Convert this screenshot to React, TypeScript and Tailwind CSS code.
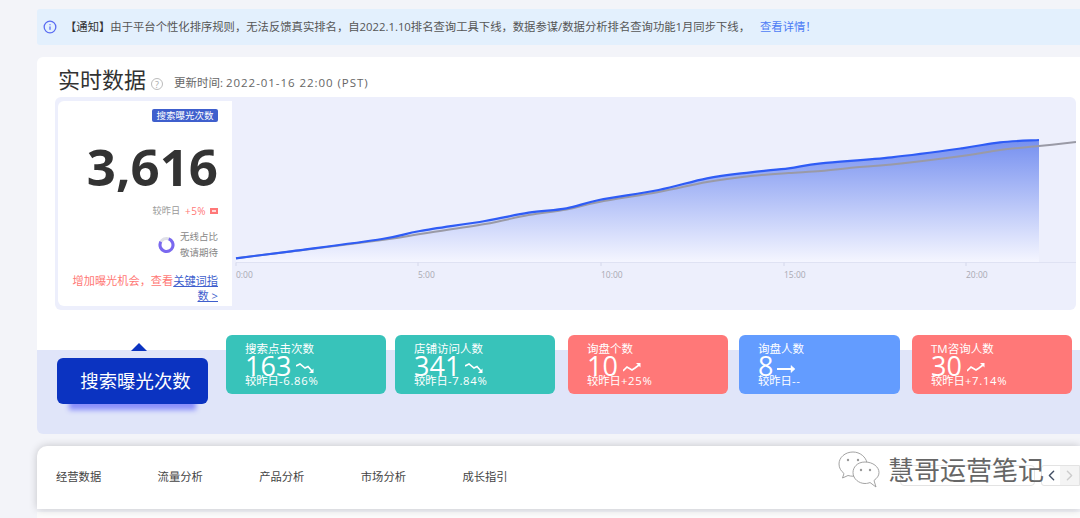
import { Info, ChevronLeft, ChevronRight } from "lucide-react";

type P = [number, number];
const blue: P[] = [[236,258.3],[295.6,250.7],[382,239],[420,231],[485,221],[528.6,212.7],[566.5,208.3],[599,200],[658.6,190],[707,178.3],[750.7,172.3],[788.6,168.3],[821,163.3],[891.6,157.3],[962,148.3],[1000,142.3],[1039,140]];
const gray: P[] = [[236,258.3],[382,240],[420,234],[485,224],[528.6,215],[566.5,209.5],[599,202],[658.6,192],[707,182],[750.7,176],[788.6,173],[821,171],[854,167.5],[891.6,164.5],[962,156],[1000,150],[1039,146],[1076,142]];

function smooth(a: P[]) {
  let d = `M${a[0][0]} ${a[0][1]}`;
  for (let i = 0; i < a.length - 1; i++) {
    const p0 = a[Math.max(i - 1, 0)];
    const p1 = a[i];
    const p2 = a[i + 1];
    const p3 = a[Math.min(i + 2, a.length - 1)];
    const c1x = p1[0] + (p2[0] - p0[0]) / 6;
    const c1y = p1[1] + (p2[1] - p0[1]) / 6;
    const c2x = p2[0] - (p3[0] - p1[0]) / 6;
    const c2y = p2[1] - (p3[1] - p1[1]) / 6;
    d += `C${c1x.toFixed(1)} ${c1y.toFixed(1)} ${c2x.toFixed(1)} ${c2y.toFixed(1)} ${p2[0]} ${p2[1]}`;
  }
  return d;
}

const FONT = "font-['Open_Sans','Noto_Sans_CJK_SC',sans-serif]";

function Trend({ kind }: { kind: "down" | "up" | "flat" }) {
  if (kind === "flat")
    return (
      <svg width="19" height="12" viewBox="0 0 19 12" className="ml-[4px] mt-[5px]" fill="none" stroke="#fff" strokeWidth="2">
        <path d="M0 6H16" />
        <path d="M14 2.5L18 6L14 9.5Z" fill="#fff" strokeWidth="0.5" />
      </svg>
    );
  return (
    <svg width="18" height="11" viewBox="0 0 18 11" className="ml-[5px] mt-[4px]" fill="none" stroke="#fff" strokeWidth="1.6">
      {kind === "down" ? (
        <>
          <path d="M0 3L4 1L9 5L12 3.5L16 8" />
          <path d="M17.5 10H13L17.5 5.5Z" fill="#fff" strokeWidth="0" />
        </>
      ) : (
        <>
          <path d="M0 8L4 4L9 7L12 5L16 2" />
          <path d="M17.5 0H13L17.5 4.5Z" fill="#fff" strokeWidth="0" />
        </>
      )}
    </svg>
  );
}

function Tile({ title, value, delta, kind, bg, w }: { title: string; value: string; delta: string; kind: "down" | "up" | "flat"; bg: string; w: string }) {
  return (
    <div className={`${bg} ${w} h-[59px] shrink-0 rounded-[6px] pl-[19px] pt-[7px] text-white`}>
      <div className="text-[11.5px] leading-[14px]">{title}</div>
      <div className="flex h-[20px] items-center text-[27px] leading-[20px]">
        {value}
        <Trend kind={kind} />
      </div>
      <div className="mt-[-2px] text-[11.3px] leading-[14px]">
        较昨日<span className="tracking-[0.7px]">{delta}</span>
      </div>
    </div>
  );
}

export default function App() {
  return (
    <div className={`${FONT} relative flex h-[518px] w-[1080px] flex-col overflow-hidden bg-[#f3f4f9] pl-[37px] pt-[9px]`}>
      <div className="flex h-[36px] shrink-0 items-center rounded-l-[3px] bg-[#e3f0fd] pl-[6px] text-[11.34px] text-[#555]">
        <Info size={14} color="#5a6cf2" strokeWidth={2.2} />
        <span className="ml-[8px] text-[#333]">【通知】</span>
        <span>由于平台个性化排序规则，无法反馈真实排名，自2022.1.10排名查询工具下线，数据参谋/数据分析排名查询功能1月同步下线，</span>
        <span className="ml-[10px] text-[#4d7cf5]">查看详情！</span>
      </div>

      <div className="mt-[12px] h-[278px] shrink-0 rounded-tl-[6px] bg-white">
        <div className="flex h-[40px] items-end pl-[21px]">
          <span className="mb-[2px] text-[22px] leading-[32px] text-[#333]">实时数据</span>
          <span className="mb-[7px] ml-[5px] flex h-[12px] w-[12px] items-center justify-center rounded-full border border-[#bbb] text-[9px] leading-none text-[#aaa]">?</span>
          <span className="mb-[6px] ml-[11px] text-[11.5px] leading-[16px] text-[#666]">
            更新时间: <span className="tracking-[0.95px]">2022-01-16 22:00 (PST)</span>
          </span>
        </div>
        <div className="ml-[18px] flex h-[213px] w-[1021px] rounded-[6px] bg-[#edeffc] py-[4px] pl-[3px]">
          <div className="flex h-[205px] w-[174px] shrink-0 flex-col items-end rounded-l-[6px] bg-white pr-[14px] pt-[8px]">
            <div className="flex h-[13px] w-[66px] items-center justify-center rounded-[2px] bg-[#3f5fcd] text-[9.5px] leading-none text-white">搜索曝光次数</div>
            <div className="mt-[10px] text-[51px] font-bold leading-[68px] text-[#333]">3,616</div>
            <div className="mt-[4px] flex items-center text-[9.2px] leading-[14px] text-[#999]">
              较昨日
              <span className="ml-[5px] text-[10px] tracking-[0.4px] text-[#ff7878]">+5%</span>
              <span className="ml-[4px] flex h-[6px] w-[8px] items-center justify-center bg-[#ff7878]">
                <span className="h-[2px] w-[4px] bg-[#ffd9d9]" />
              </span>
            </div>
            <div className="mt-[11px] flex items-center">
              <svg width="17" height="18" viewBox="0 0 17 18" fill="none" strokeWidth="3">
                <circle cx="8.5" cy="9" r="6.5" stroke="#dfe0e8" />
                <circle cx="8.5" cy="9" r="6.5" stroke="#7a68f0" strokeDasharray="31 10" transform="rotate(-70 8.5 9)" />
              </svg>
              <div className="ml-[5px] text-[9.5px] leading-[16px] text-[#888]">
                <div>无线占比</div>
                <div>敬请期待</div>
              </div>
            </div>
            <div className="mt-[12px] w-[150px] text-right text-[11.2px] leading-[15px] text-[#ff7875]">
              增加曝光机会，查看<span className="text-[#3f5fcd] underline">关键词指数 &gt;</span>
            </div>
          </div>
          <svg width="844" height="205" viewBox="232 101 844 205" className="shrink-0">
            <defs>
              <linearGradient id="area" x1="0" y1="0" x2="0" y2="1">
                <stop offset="0" stopColor="#7690f0" />
                <stop offset="1" stopColor="#f5f6ff" />
              </linearGradient>
            </defs>
            <path d={`${smooth(blue)}L1039 262.5L236 262.5Z`} fill="url(#area)" />
            <path d="M236 262.5H1076" stroke="#dfe2f3" />
            {[236, 418, 601, 784, 966].map((x) => (
              <path key={x} d={`M${x} 262.5V266`} stroke="#d4d7ea" />
            ))}
            {["0:00", "5:00", "10:00", "15:00", "20:00"].map((t, i) => (
              <text key={t} x={[236, 418, 601, 784, 966][i]} y="278" fontSize="8.5" fill="#a9a9b2">
                {t}
              </text>
            ))}
            <path d={smooth(gray)} fill="none" stroke="#9a9aa6" strokeWidth="2" />
            <path d={smooth(blue)} fill="none" stroke="#2f5cf5" strokeWidth="2.2" />
          </svg>
        </div>
      </div>

      <div className="flex h-[99px] shrink-0 rounded-bl-[6px] bg-[linear-gradient(#fff_15px,#e0e5f9_15px)]">
        <div className="ml-[20px] mr-[18px] flex w-[151px] shrink-0 flex-col items-center pt-[8px]">
          <div className="ml-[13px] h-0 w-0 border-x-[8px] border-b-[8px] border-x-transparent border-b-[#0b33c1]" />
          <div className="mt-[7px] flex h-[46px] w-[151px] items-center justify-center rounded-[6px] bg-[#0b33c1] pl-[6px] text-[18.4px] text-white shadow-[0_18px_5px_-12px_#8a8ffb]">搜索曝光次数</div>
        </div>
        <div className="flex">
          <Tile title="搜索点击次数" value="163" delta="-6.86%" kind="down" bg="bg-[#38c3ba]" w="w-[160px]" />
          <div className="w-[9px]" />
          <Tile title="店铺访问人数" value="341" delta="-7.84%" kind="down" bg="bg-[#38c3ba]" w="w-[160px]" />
          <div className="w-[13px]" />
          <Tile title="询盘个数" value="10" delta="+25%" kind="up" bg="bg-[#ff7878]" w="w-[160px]" />
          <div className="w-[11px]" />
          <Tile title="询盘人数" value="8" delta="--" kind="flat" bg="bg-[#639cff]" w="w-[161px]" />
          <div className="w-[12px]" />
          <Tile title="TM咨询人数" value="30" delta="+7.14%" kind="up" bg="bg-[#ff7878]" w="w-[160px]" />
        </div>
      </div>

      <div className="relative mt-[12px] flex h-[63px] shrink-0 items-center gap-[56.4px] rounded-tl-[10px] bg-white pl-[19px] text-[11.3px] text-[#444] shadow-[0_0_8px_rgba(0,0,0,0.2)]">
        <span>经营数据</span>
        <span>流量分析</span>
        <span>产品分析</span>
        <span>市场分析</span>
        <span>成长指引</span>
        <div className="absolute left-[863px] top-[19px] h-[21px] w-[135px] rounded-[4px] border border-[#e3e3e3]" />
        <div className="absolute left-[1004px] top-[19px] flex h-[21px] w-[39px] rounded-l-[3px] border border-[#e3e3e3] bg-white">
          <div className="flex w-[19px] items-center justify-center"><ChevronLeft size={17} color="#445066" /></div>
          <div className="flex w-[20px] items-center justify-center bg-[#f4f4f4]"><ChevronRight size={17} color="#ccc" /></div>
        </div>
      </div>
      <div className="mt-[3px] flex-1 bg-[#fbfbfb]" />

      <div className="absolute left-[838px] top-[451px] flex items-center">
        <svg width="42" height="38" viewBox="0 0 42 38" fill="#fff" stroke="#999" strokeWidth="0.9">
          <path d="M15 1C7 1 1 6.5 1 13C1 17 3 20 6 22.5L4.5 27L10 24.5C12 25 13.5 25.3 15 25.2C24 25 30 19 29 12C28 6 22 1 15 1Z" />
          <path d="M27 11C19 11 15 16.5 15 21.5C15 28 21 32.5 27 32.5C29 32.5 31 32 32 31.5L38 36L36 29.5C39 27 41 25 41 21.5C41 16 35 11 27 11Z" />
          <circle cx="10" cy="9" r="1.2" fill="#999" stroke="none" />
          <circle cx="20" cy="9" r="1.2" fill="#999" stroke="none" />
          <circle cx="23" cy="19" r="1.2" fill="#999" stroke="none" />
          <circle cx="32" cy="19" r="1.2" fill="#999" stroke="none" />
        </svg>
        <span className="ml-[8px] text-[26px] leading-[38px] text-[#666] [text-shadow:0_0_1px_#fff]">慧哥运营笔记</span>
      </div>
    </div>
  );
}
